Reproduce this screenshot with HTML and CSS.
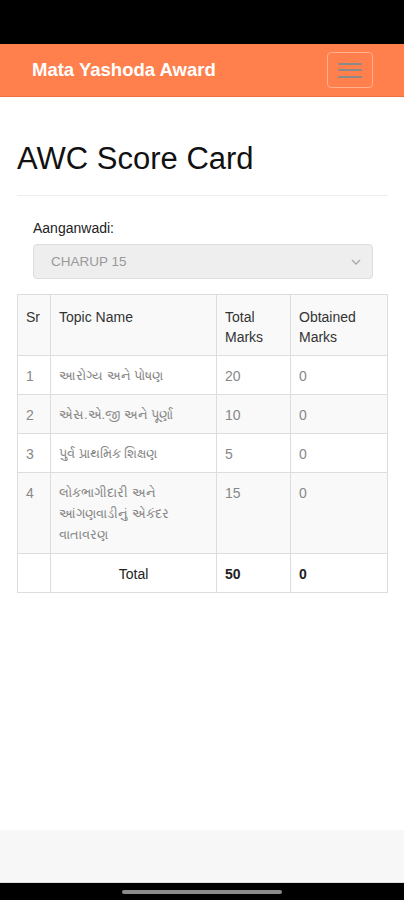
FILE: index.html
```html
<!DOCTYPE html>
<html lang="gu">
<head>
  <meta charset="UTF-8" />
  <meta name="viewport" content="width=device-width, initial-scale=1.0" />
  <title>AWC Score Card</title>
  <link rel="stylesheet" href="styles.css">
</head>
<body>
  <div class="status-bar"></div>

  <nav class="navbar">
    <span class="brand">Mata Yashoda Award</span>
    <button class="toggle" aria-label="menu">
      <span></span>
      <span></span>
      <span></span>
    </button>
  </nav>

  <main class="content">
    <h1>AWC Score Card</h1>
    <hr />

    <div class="form-group">
      <label for="awc">Aanganwadi:</label>
      <div class="select-box">
        <span>CHARUP 15</span>
        <svg width="12" height="8" viewBox="0 0 12 8"><path d="M2 2l4 4 4-4" fill="none" stroke="#aaa" stroke-width="1.4"/></svg>
      </div>
    </div>

    <table class="score-table">
      <tr class="head striped">
        <th class="sr">Sr</th>
        <th class="topic">Topic Name</th>
        <th class="total">Total Marks</th>
        <th>Obtained Marks</th>
      </tr>
      <tr>
        <td>1</td>
        <td class="gu">આરોગ્ય અને પોષણ</td>
        <td>20</td>
        <td>0</td>
      </tr>
      <tr class="striped">
        <td>2</td>
        <td class="gu">એસ.એ.જી અને પૂર્ણા</td>
        <td>10</td>
        <td>0</td>
      </tr>
      <tr>
        <td>3</td>
        <td class="gu">પુર્વ પ્રાથમિક શિક્ષણ</td>
        <td>5</td>
        <td>0</td>
      </tr>
      <tr class="striped">
        <td>4</td>
        <td class="gu">લોકભાગીદારી અને આંગણવાડીનું એકંદર વાતાવરણ</td>
        <td>15</td>
        <td>0</td>
      </tr>
      <tr class="sum">
        <td></td>
        <td class="center">Total</td>
        <td>50</td>
        <td>0</td>
      </tr>
    </table>
  </main>

  <div class="bottom-bar"></div>
  <div class="home-bar"><span></span></div>
</body>
</html>
```

FILE: styles.css
```css
* {
  box-sizing: border-box;
}
body {
  font-family: "Liberation Sans", Arial, "Noto Sans", sans-serif;
  margin: 0;
  padding: 0;
  color: #333;
  background: #fff;
  height: 900px;
  display: flex;
  flex-direction: column;
}
.status-bar {
  height: 44px;
  background: #000;
}
.navbar {
  height: 53px;
  background: #ff7f4d;
  border-bottom: 1px solid #f07040;
  display: flex;
  align-items: center;
  justify-content: space-between;
  padding: 0 31px 0 32px;
}
.brand {
  color: #fff;
  font-size: 18.5px;
  font-weight: bold;
}
.toggle {
  width: 46px;
  height: 36px;
  border: 1px solid #ffb08f;
  border-radius: 4px;
  background: transparent;
  display: flex;
  flex-direction: column;
  justify-content: center;
  align-items: center;
  gap: 4.5px;
  padding: 0;
}
.toggle span {
  width: 24px;
  height: 2px;
  border-radius: 1px;
  background: #8a8a8a;
}
.content {
  flex: 1;
  padding: 0 16px 0 17px;
}
h1 {
  font-size: 31px;
  font-weight: normal;
  color: #111;
  margin: 44px 0 0;
  line-height: 36px;
}
hr {
  border: 0;
  border-top: 1px solid #eee;
  margin: 18px 0 24px;
}
.form-group {
  padding: 0 15px 0 16px;
  margin-bottom: 15px;
}
label {
  display: block;
  font-size: 14px;
  color: #222;
  margin-bottom: 8px;
}
.select-box {
  height: 35px;
  background: #eee;
  border: 1px solid #ddd;
  border-radius: 4px;
  display: flex;
  align-items: center;
  justify-content: space-between;
  padding: 0 10px 0 17px;
  font-size: 13.5px;
  color: #999;
}
.score-table {
  width: 100%;
  border-collapse: collapse;
  border: 1px solid #ddd;
  font-size: 14px;
}
.score-table th,
.score-table td {
  border: 1px solid #ddd;
  padding: 8px 8px;
  text-align: left;
  vertical-align: top;
  line-height: 20px;
}
.score-table th {
  font-weight: normal;
  color: #333;
  padding-top: 12px;
}
.score-table .striped {
  background: #f9f9f9;
}
.score-table td {
  color: #888;
  padding-top: 10px;
}
.score-table td.gu {
  font-size: 13px;
  line-height: 21px;
  padding-top: 9px;
}
.score-table .sr {
  width: 33px;
}
.score-table .topic {
  width: 166px;
}
.score-table .total {
  width: 74px;
}
.score-table .head th {
  height: 61px;
}
.score-table tr td {
  height: 39px;
}
.score-table .sum td {
  color: #222;
  font-weight: bold;
}
.score-table .sum .center {
  text-align: center;
  font-weight: normal;
}
.bottom-bar {
  height: 53px;
  background: #f7f7f7;
  border-bottom: 1px solid #ddd;
}
.home-bar {
  height: 17px;
  background: #000;
  display: flex;
  justify-content: center;
  align-items: center;
}
.home-bar span {
  width: 160px;
  height: 4px;
  border-radius: 2px;
  background: #8a8a8a;
}
```
